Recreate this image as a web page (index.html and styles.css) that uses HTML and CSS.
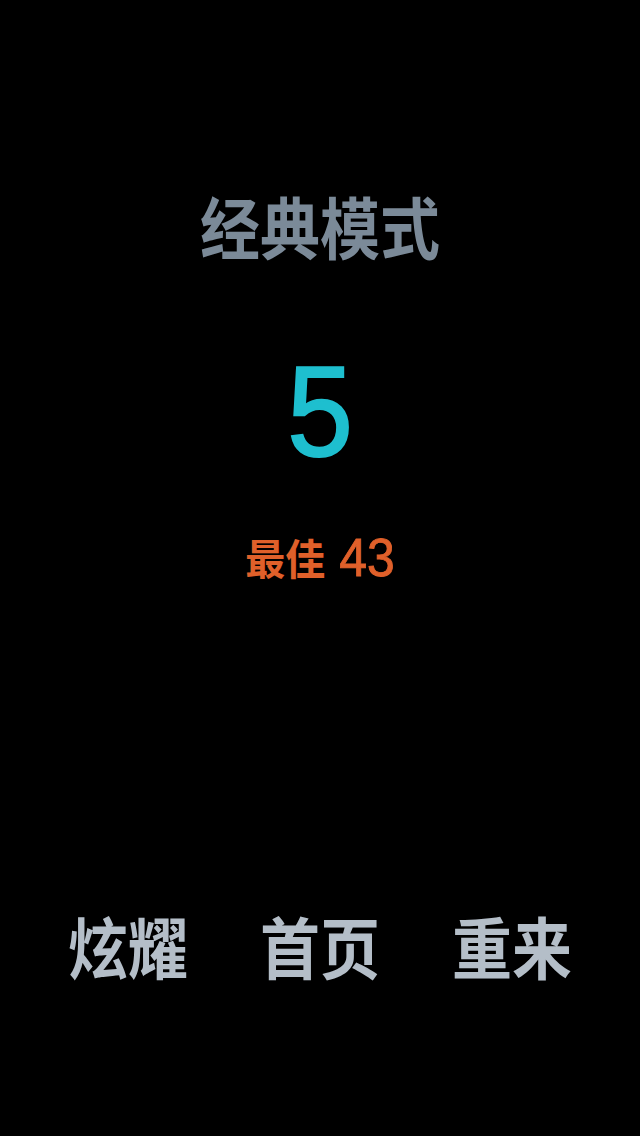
FILE: index.html
```html
<!DOCTYPE html>
<html lang="zh">
<head>
<meta charset="utf-8">
<link rel="stylesheet" href="styles.css">
</head>
<body>
<div class="screen">
  <div class="title">经典模式</div>
  <div class="score">5</div>
  <div class="best"><span class="best-label">最佳</span><span class="best-num"> 43</span></div>
  <div class="spacer"></div>
  <div class="actions">
    <div class="btn">炫耀</div>
    <div class="btn">首页</div>
    <div class="btn">重来</div>
  </div>
</div>
</body>
</html>
```
FILE: styles.css
```css
html, body {
  margin: 0;
  padding: 0;
  background: #000;
}
.screen {
  width: 640px;
  height: 1136px;
  display: flex;
  flex-direction: column;
  align-items: center;
  font-family: "Liberation Sans", "Noto Sans CJK SC", sans-serif;
}
.title {
  margin-top: 192px;
  font-size: 60px;
  line-height: 80px;
  font-weight: 700;
  color: #7b8a98;
  transform: scaleY(1.12);
}
.score {
  margin-top: 70px;
  font-size: 118px;
  line-height: 140px;
  color: #1ebfcf;
  -webkit-text-stroke: 2px #1ebfcf;
  transform: scaleY(1.08);
}
.best {
  margin-top: 50px;
  line-height: 50px;
  color: #e0602a;
  transform: scaleY(1.06);
}
.best-label {
  font-family: "Noto Sans CJK SC", sans-serif;
  font-size: 40px;
  font-weight: 700;
  vertical-align: 1px;
}
.best-num {
  font-size: 50px;
  -webkit-text-stroke: 0.8px #e0602a;
}
.spacer {
  flex: 1;
}
.actions {
  display: flex;
  width: 576px;
  margin-bottom: 144px;
}
.btn {
  flex: 1;
  text-align: center;
  font-size: 60px;
  line-height: 80px;
  font-weight: 700;
  color: #b4bec8;
  transform: scaleY(1.12);
}
```
